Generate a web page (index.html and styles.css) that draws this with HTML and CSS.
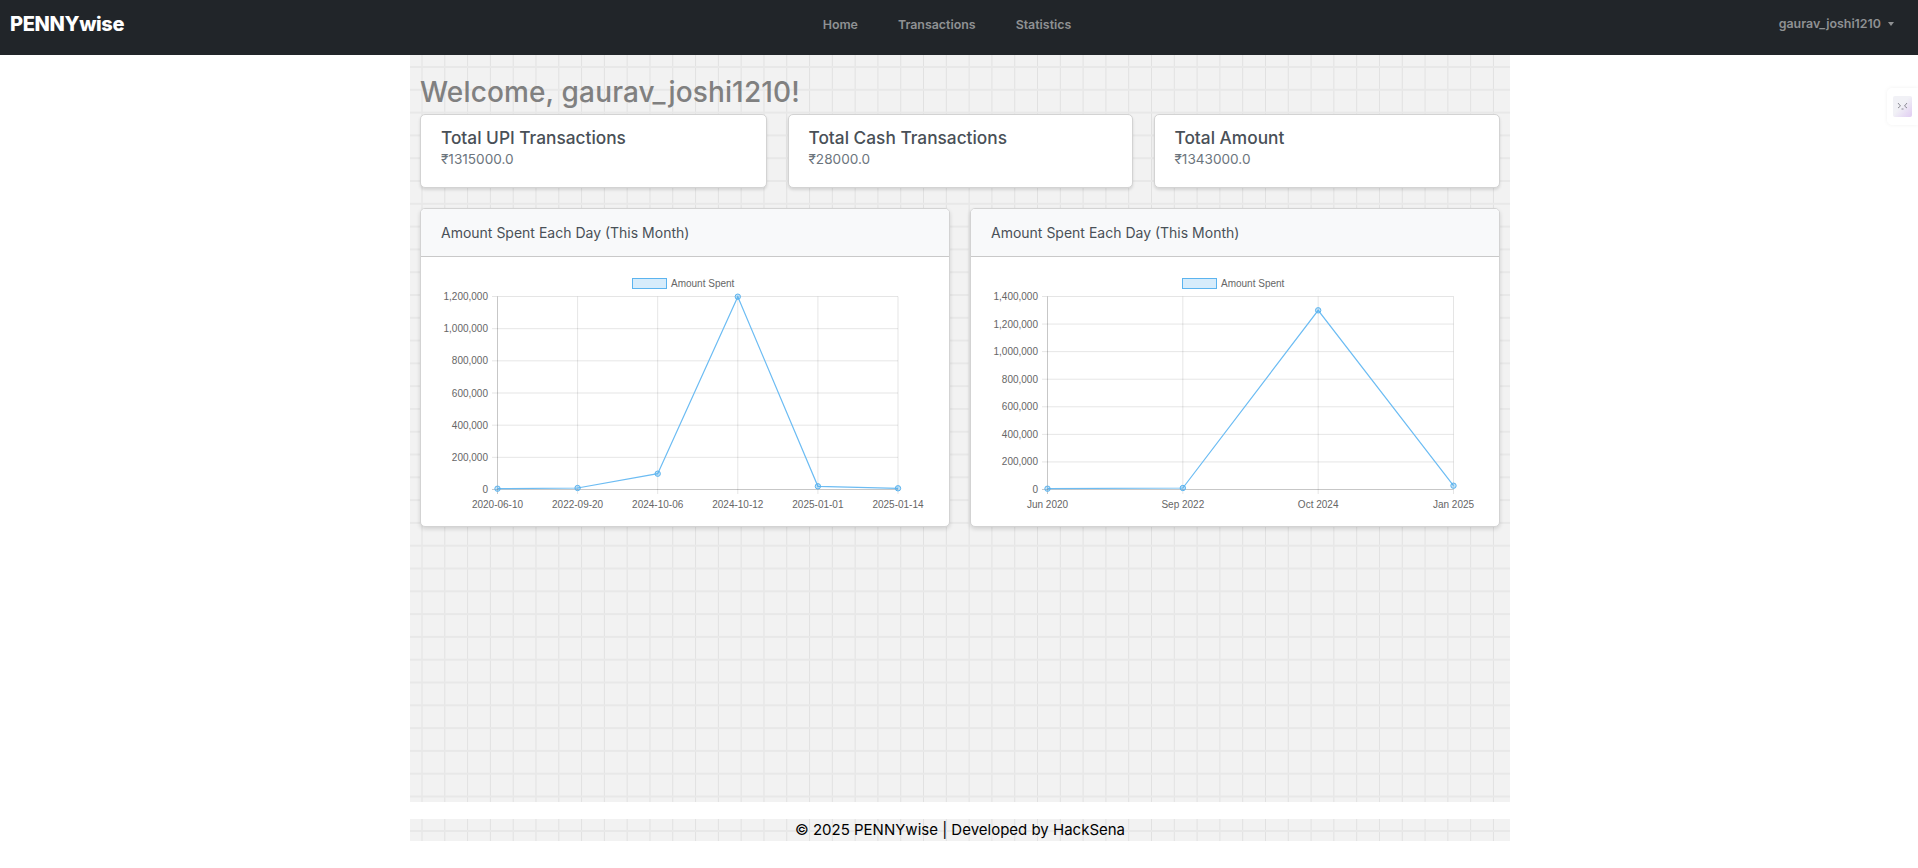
FILE: index.html
```html
<!DOCTYPE html>
<html lang="en">
<head>
    <meta charset="UTF-8">
    <meta name="viewport" content="width=device-width, initial-scale=1.0">
    <title>PENNYwise</title>
    <link rel="stylesheet" href="styles.css">
</head>
<body>

<nav class="navbar">
    <a class="brand" href="#">PENNYwise</a>
    <ul class="nav-links">
        <li><a href="#">Home</a></li>
        <li><a href="#">Transactions</a></li>
        <li><a href="#">Statistics</a></li>
    </ul>
    <a class="user-menu" href="#">gaurav_joshi1210<span class="caret"></span></a>
</nav>

<main class="content grid-bg">
    <h1 class="welcome">Welcome, gaurav_joshi1210!</h1>

    <section class="stats">
        <div class="stat-card">
            <h2>Total UPI Transactions</h2>
            <p>₹1315000.0</p>
        </div>
        <div class="stat-card">
            <h2>Total Cash Transactions</h2>
            <p>₹28000.0</p>
        </div>
        <div class="stat-card">
            <h2>Total Amount</h2>
            <p>₹1343000.0</p>
        </div>
    </section>

    <section class="charts">
        <div class="chart-card">
            <div class="chart-header">Amount Spent Each Day (This Month)</div>
            <div class="chart-body">
                <svg class="chart" viewBox="0 0 487 232">
                    <rect class="legend-box" x="190.5" y="1.5" width="34" height="10"/>
                    <text class="legend-text" x="229" y="9.5">Amount Spent</text>

                    <path class="grid-line" d="M50 19.5H456M50 51.67H456M50 83.83H456M50 116H456M50 148.17H456M50 180.33H456"/>
                    <path class="grid-line" d="M135.6 19.5V217M215.7 19.5V217M295.8 19.5V217M375.9 19.5V217M456 19.5V217"/>
                    <path class="axis-line" d="M55.5 19.5V217M50 212.5H456"/>

                    <text class="tick-y" x="46" y="23">1,200,000</text>
                    <text class="tick-y" x="46" y="55">1,000,000</text>
                    <text class="tick-y" x="46" y="87">800,000</text>
                    <text class="tick-y" x="46" y="119.5">600,000</text>
                    <text class="tick-y" x="46" y="151.5">400,000</text>
                    <text class="tick-y" x="46" y="184">200,000</text>
                    <text class="tick-y" x="46" y="216">0</text>

                    <text class="tick-x" x="55.5" y="230.5">2020-06-10</text>
                    <text class="tick-x" x="135.6" y="230.5">2022-09-20</text>
                    <text class="tick-x" x="215.7" y="230.5">2024-10-06</text>
                    <text class="tick-x" x="295.8" y="230.5">2024-10-12</text>
                    <text class="tick-x" x="375.9" y="230.5">2025-01-01</text>
                    <text class="tick-x" x="456" y="230.5">2025-01-14</text>

                    <polyline class="data-line" points="55.5,211.7 135.6,211 215.7,196.7 295.8,19.7 375.9,209.3 456,211.3"/>
                    <circle class="data-point" cx="55.5" cy="211.7" r="2.7"/>
                    <circle class="data-point" cx="135.6" cy="211" r="2.7"/>
                    <circle class="data-point" cx="215.7" cy="196.7" r="2.7"/>
                    <circle class="data-point" cx="295.8" cy="19.7" r="2.7"/>
                    <circle class="data-point" cx="375.9" cy="209.3" r="2.7"/>
                    <circle class="data-point" cx="456" cy="211.3" r="2.7"/>
                </svg>
            </div>
        </div>

        <div class="chart-card">
            <div class="chart-header">Amount Spent Each Day (This Month)</div>
            <div class="chart-body">
                <svg class="chart" viewBox="0 0 487 232">
                    <rect class="legend-box" x="190.5" y="1.5" width="34" height="10"/>
                    <text class="legend-text" x="229" y="9.5">Amount Spent</text>

                    <path class="grid-line" d="M50 19.5H461.5M50 47.07H461.5M50 74.64H461.5M50 102.21H461.5M50 129.79H461.5M50 157.36H461.5M50 184.93H461.5"/>
                    <path class="grid-line" d="M190.83 19.5V217M326.17 19.5V217M461.5 19.5V217"/>
                    <path class="axis-line" d="M55.5 19.5V217M50 212.5H461.5"/>

                    <text class="tick-y" x="46" y="23">1,400,000</text>
                    <text class="tick-y" x="46" y="50.5">1,200,000</text>
                    <text class="tick-y" x="46" y="78">1,000,000</text>
                    <text class="tick-y" x="46" y="106">800,000</text>
                    <text class="tick-y" x="46" y="133">600,000</text>
                    <text class="tick-y" x="46" y="161">400,000</text>
                    <text class="tick-y" x="46" y="188">200,000</text>
                    <text class="tick-y" x="46" y="216">0</text>

                    <text class="tick-x" x="55.5" y="230.5">Jun 2020</text>
                    <text class="tick-x" x="190.83" y="230.5">Sep 2022</text>
                    <text class="tick-x" x="326.17" y="230.5">Oct 2024</text>
                    <text class="tick-x" x="461.5" y="230.5">Jan 2025</text>

                    <polyline class="data-line" points="55.5,211.7 190.83,211 326.17,33.3 461.5,208.7"/>
                    <circle class="data-point" cx="55.5" cy="211.7" r="2.7"/>
                    <circle class="data-point" cx="190.83" cy="211" r="2.7"/>
                    <circle class="data-point" cx="326.17" cy="33.3" r="2.7"/>
                    <circle class="data-point" cx="461.5" cy="208.7" r="2.7"/>
                </svg>
            </div>
        </div>
    </section>
</main>

<footer class="footer grid-bg">© 2025 PENNYwise | Developed by HackSena</footer>

<div class="side-widget">
    <svg class="side-icon" viewBox="0 0 19 21">
        <defs>
            <linearGradient id="side-fill" x1="0" y1="0" x2="1" y2="1">
                <stop offset="0.45" stop-color="#f1f1f6"/>
                <stop offset="1" stop-color="#e0ccf2"/>
            </linearGradient>
        </defs>
        <rect width="19" height="21" rx="2" fill="url(#side-fill)"/>
        <path class="side-face" d="M5 7l2.5 3-2.500 2M14 7l-2.500 3 2.500 2M8.500 13h2"/>
    </svg>
</div>

</body>
</html>
```

FILE: styles.css
```css
* {
    margin: 0;
    padding: 0;
    box-sizing: border-box;
}

body {
    font-family: Inter, "Noto Sans", sans-serif;
    background-color: #fff;
    min-height: 100vh;
    overflow: hidden;
}

a {
    text-decoration: none;
}

ul {
    list-style: none;
}

.grid-bg {
    background-color: #f2f2f2;
    background-image:
        linear-gradient(to bottom, #e8e8e8 2px, transparent 2px),
        linear-gradient(to right, #e1e1e1 1px, transparent 1px);
    background-size: 22.8px 22.8px;
    background-position: 11.5px 11px;
}

/* navbar */
.navbar {
    height: 55px;
    background-color: #212529;
    display: grid;
    grid-template-columns: 1fr auto 1fr;
    align-items: start;
    padding: 12px 24px 0 10px;
}

.brand {
    font-size: 20px;
    font-weight: 800;
    line-height: 24px;
    color: #fff;
    letter-spacing: -0.35px;
}

.nav-links {
    display: flex;
    gap: 40px;
    padding-top: 1px;
    margin-right: 10px;
}

.nav-links a,
.user-menu {
    font-size: 12.4px;
    font-weight: 600;
    line-height: 20px;
    color: #8f9193;
}

.user-menu {
    justify-self: end;
    padding-top: 2px;
    display: flex;
    align-items: center;
}

.caret {
    margin-left: 7px;
    border-top: 4px solid #8f9193;
    border-left: 3px solid transparent;
    border-right: 3px solid transparent;
}

/* main area */
.content {
    width: 1100px;
    height: 747px;
    margin: 0 0 17px 410px;
    padding: 17px 10px 0;
}

.welcome {
    font-size: 28px;
    font-weight: 500;
    line-height: 40px;
    letter-spacing: 0.15px;
    color: #808080;
    margin-bottom: 2px;
}

.stats {
    display: grid;
    grid-template-columns: 346.5px 345px 346px;
    gap: 21px;
    margin-bottom: 20px;
}

.stat-card {
    height: 74px;
    background-color: #fff;
    border: 1px solid #d3d3d3;
    border-radius: 5px;
    box-shadow: 0 2px 3px rgba(0, 0, 0, 0.12);
    padding: 10.5px 20px;
}

.stat-card h2 {
    font-size: 17.3px;
    font-weight: 500;
    line-height: 23px;
    color: #495057;
}

.stat-card p {
    font-size: 13.6px;
    line-height: 20px;
    color: #6c757d;
}

.charts {
    display: grid;
    grid-template-columns: repeat(2, 529.5px);
    gap: 20.5px;
}

.chart-card {
    height: 319px;
    background-color: #fff;
    border: 1px solid #d3d3d3;
    border-radius: 5px;
    box-shadow: 0 2px 4px rgba(0, 0, 0, 0.14);
    overflow: hidden;
}

.chart-header {
    height: 48px;
    padding: 0 20px;
    font-size: 14px;
    line-height: 47px;
    color: #495057;
    background-color: #f8f9fa;
    border-bottom: 1px solid #c9c9c9;
}

.chart-body {
    padding: 20px 20px 0 21px;
}

.chart {
    display: block;
    width: 487px;
    height: 232px;
    overflow: visible;
}

.chart text {
    font-family: "Liberation Sans", Arial, sans-serif;
    font-size: 10px;
    fill: #666;
}

.chart .tick-y {
    text-anchor: end;
}

.chart .tick-x {
    text-anchor: middle;
}

.legend-box {
    fill: rgba(54, 162, 235, 0.2);
    stroke: #5cb4ef;
    stroke-width: 1;
}

.grid-line {
    fill: none;
    stroke: rgba(0, 0, 0, 0.1);
    stroke-width: 1;
}

.axis-line {
    fill: none;
    stroke: rgba(0, 0, 0, 0.22);
    stroke-width: 1;
}

.data-line {
    fill: none;
    stroke: #6cbcf3;
    stroke-width: 1.2;
}

.data-point {
    fill: rgba(54, 162, 235, 0.3);
    stroke: #5cb4ef;
    stroke-width: 1;
}

/* footer */
.footer {
    width: 1100px;
    height: 22px;
    margin-left: 410px;
    font-size: 15px;
    line-height: 22px;
    text-align: center;
    color: #000;
}

/* floating widget on the right edge */
.side-widget {
    position: absolute;
    top: 88px;
    right: 0;
    width: 31px;
    height: 37px;
    padding: 8px 6px 0;
    background-color: #fff;
    border-radius: 5px 0 0 5px;
    box-shadow: 0 0 4px rgba(0, 0, 0, 0.06);
}

.side-icon {
    display: block;
    width: 19px;
    height: 21px;
}

.side-face {
    fill: none;
    stroke: #8d8d96;
    stroke-width: 1;
}
```
